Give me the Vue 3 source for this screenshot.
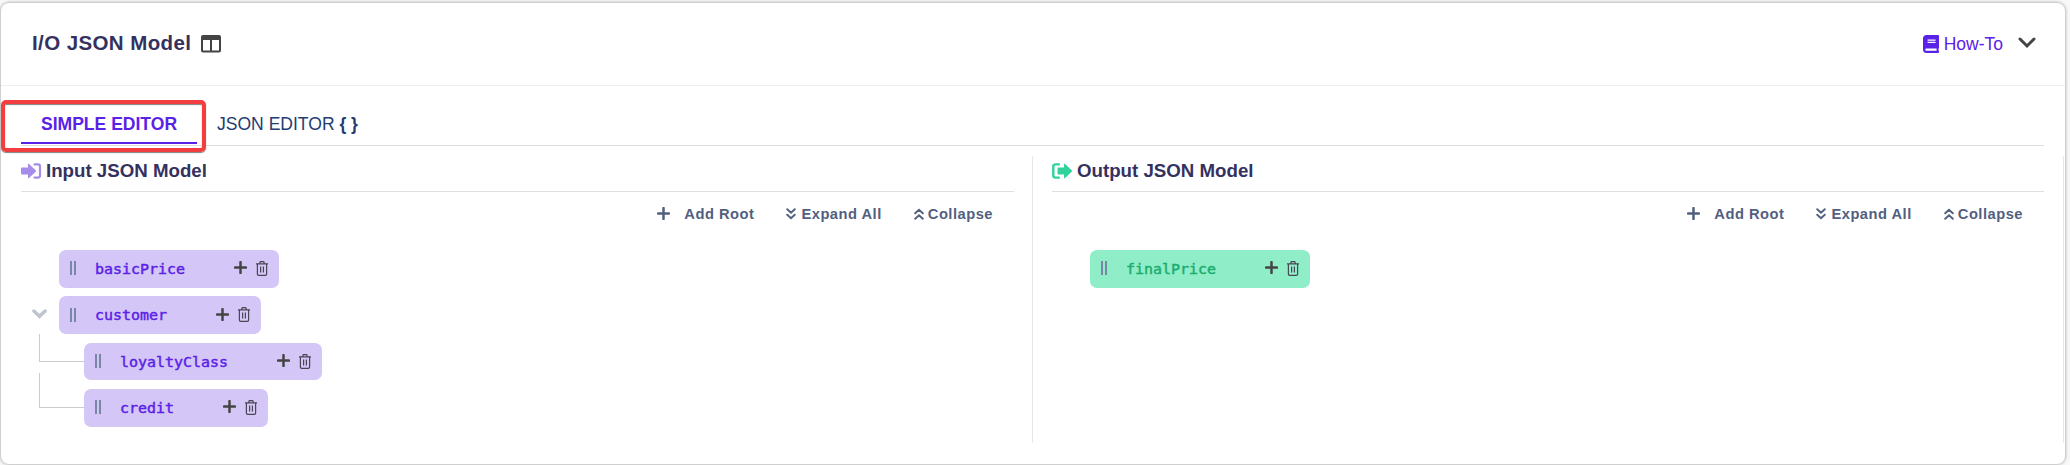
<script setup>
const columns = [
  {
    id: 'input',
    title: 'Input JSON Model',
    nodes: [
      { name: 'basicPrice' },
      { name: 'customer', open: true },
      { name: 'loyaltyClass', child: true, first: true },
      { name: 'credit', child: true },
    ],
  },
  { id: 'output', title: 'Output JSON Model', nodes: [{ name: 'finalPrice' }] },
]
</script>

<template>
  <div class="page">
    <section class="card">
      <header class="header">
        <h1 class="title">I/O JSON Model</h1>
        <svg class="layout-icon" width="20" height="18" viewBox="0 0 20 18">
          <path fill="#444" fill-rule="evenodd" d="M2 0h16a2 2 0 0 1 2 2v13.500a2 2 0 0 1-2 2H2a2 2 0 0 1-2-2V2a2 2 0 0 1 2-2zM2 5v10.500h7V5zM11 5v10.500h7V5z" />
        </svg>
        <a class="howto">
          <svg width="16" height="18" viewBox="0 0 448 512" preserveAspectRatio="none">
            <path fill="#5a21e6" d="M448 360V24c0-13.300-10.700-24-24-24H96C43 0 0 43 0 96v320c0 53 43 96 96 96h328c13.300 0 24-10.700 24-24v-16c0-7.500-3.500-14.300-8.900-18.700-4.200-15.400-4.200-59.300 0-74.700 5.400-4.300 8.900-11.100 8.900-18.600zM128 134c0-3.300 2.700-6 6-6h212c3.300 0 6 2.700 6 6v20c0 3.300-2.700 6-6 6H134c-3.300 0-6-2.700-6-6v-20zm0 64c0-3.300 2.700-6 6-6h212c3.300 0 6 2.700 6 6v20c0 3.300-2.700 6-6 6H134c-3.300 0-6-2.700-6-6v-20zm253.400 250H96c-17.700 0-32-14.300-32-32 0-17.600 14.400-32 32-32h285.400c-1.900 17.100-1.900 46.900 0 64z" />
          </svg>
          <span>How-To</span>
        </a>
        <svg class="chevron" width="18" height="12" viewBox="0 0 18 12">
          <path d="M2 2l7 7 7-7" fill="none" stroke="#444" stroke-width="3" stroke-linecap="round" />
        </svg>
      </header>

      <div class="body">
        <nav class="tabs">
          <a class="tab active">SIMPLE EDITOR</a>
          <a class="tab">JSON EDITOR <b>{ }</b></a>
          <span class="highlight"></span>
        </nav>
        <div class="columns">
          <section v-for="col in columns" :key="col.id" class="column" :class="col.id">
            <h2 class="column-title">
              <svg v-if="col.id === 'input'" width="21" height="16" viewBox="0 0 21 16">
                <path fill="#a78bea" d="M0 5.500q0-1 1-1h6V1.200q0-1.200 1-.3l6.700 6.300q.8.800 0 1.600L8 15.100q-1 .9-1-.3v-3.300H1q-1 0-1-1z" />
                <path fill="none" stroke="#a78bea" stroke-width="2.200" stroke-linecap="round" d="M13.500 1.400H17q2 0 2 2v9.200q0 2-2 2h-3.500" />
              </svg>
              <svg v-else width="21" height="16" viewBox="0 0 21 16">
                <path fill="#2fd39b" d="M5.500 5.500q0-1 1-1H12V1.200q0-1.200 1-.3l6.700 6.300q.8.800 0 1.600L13 15.100q-1 .9-1-.3v-3.300H6.500q-1 0-1-1z" />
                <path fill="none" stroke="#2fd39b" stroke-width="2.400" stroke-linecap="round" d="M6.800 1.400H3.500q-2.200 0-2.200 2v9.200q0 2 2.200 2h3.300" />
              </svg>
              <span>{{ col.title }}</span>
            </h2>
            <div class="actions">
              <a class="action add">
                <svg width="13" height="13" viewBox="0 0 13 13"><path d="M6.500 1v11M1 6.500h11" stroke="currentColor" stroke-width="2.500" stroke-linecap="round" /></svg>
                Add Root
              </a>
              <a class="action expand">
                <svg width="10" height="12" viewBox="0 0 10 12"><path d="M1.200 1.200L5 4.700l3.800-3.500M1.200 6.700L5 10.200l3.800-3.500" fill="none" stroke="currentColor" stroke-width="1.900" stroke-linecap="round" /></svg>
                Expand All
              </a>
              <a class="action collapse">
                <svg width="10" height="12" viewBox="0 0 10 12"><path d="M1.200 5.300L5 1.800l3.800 3.500M1.200 10.800L5 7.300l3.800 3.500" fill="none" stroke="currentColor" stroke-width="1.900" stroke-linecap="round" /></svg>
                Collapse
              </a>
            </div>
            <div class="tree">
              <div v-for="n in col.nodes" :key="n.name" class="row">
                <span v-if="n.child" class="connector" :class="{ first: n.first }"></span>
                <span v-else class="toggle">
                  <svg v-if="n.open" width="15" height="10" viewBox="0 0 15 10"><path d="M1.900 2l5.600 5.300L13.100 2" fill="none" stroke="#bfc4d0" stroke-width="3.400" stroke-linecap="round" /></svg>
                </span>
                <div class="node">
                  <span class="grip"></span>
                  <span class="name">{{ n.name }}</span>
                  <svg class="plus" width="13" height="13" viewBox="0 0 13 13"><path d="M6.500 1.100v10.800M1.100 6.500h10.800" stroke="#444" stroke-width="2.500" stroke-linecap="round" /></svg>
                  <svg class="trash" width="12" height="15" viewBox="0 0 12 15">
                    <path d="M0 2.800h12M3.600 2.500L4.300.7h3.400l.7 1.800M1.400 3v9.900q0 1.400 1.300 1.400h6.600q1.300 0 1.300-1.400V3M4.600 5.500v6M7.400 5.500v6" fill="none" stroke="#4a4754" stroke-width="1.200" />
                  </svg>
                </div>
              </div>
            </div>
          </section>
        </div>
      </div>
    </section>
  </div>
</template>

<style>
body { background: #f8f8f8; }
</style>

<style scoped>
* { box-sizing: border-box; }
.page {
  height: 465px;
  padding: 3px 5px 1px 1px;
  overflow: hidden;
  font-family: "Liberation Sans", Arial, sans-serif;
}
.card {
  height: 461px;
  background: #fff;
  border-radius: 8px;
  box-shadow: 0 0 3px 1px rgba(0, 0, 0, .26);
}
.header {
  display: flex;
  align-items: center;
  height: 83px;
  padding: 0 29px 0 31px;
  border-bottom: 1px solid #efefef;
}
.title { margin: 0 0 2px; font-size: 20.500px; letter-spacing: .4px; line-height: 24px; color: #35315f; white-space: nowrap; }
.layout-icon { margin: 0 auto 0 10px; }
.howto { display: flex; align-items: center; gap: 5px; font-size: 17.500px; color: #5a21e6; }
.chevron { margin-left: 15px; margin-bottom: 3px; }
.body { padding: 14px 1px 0 0; }
.tabs {
  position: relative;
  display: flex;
  height: 46px;
  margin: 0 20px;
  border-bottom: 1px solid #dfdfdf;
  font-size: 17.550px;
  color: #233c73;
}
.tab { padding-left: 20px; line-height: 49px; white-space: nowrap; }
.tab.active { width: 176px; height: 44px; border-bottom: 2px solid #5a21e6; color: #5a21e6; font-weight: 700; }
.highlight {
  position: absolute;
  left: -20px;
  top: 0;
  width: 205px;
  height: 52px;
  border: 4px solid #f33e40;
  border-radius: 5px;
  box-shadow: 0 1px 1px rgba(0, 0, 0, .5), inset 0 1px 1px rgba(0, 0, 0, .5);
}
.columns { display: flex; padding-top: 10px; }
.column { height: 287px; border-right: 1px solid #e5e7eb; }
.input { width: 1032px; padding: 0 18px 0 20px; }
.output { width: 1031px; padding: 0 19px; }
.column-title {
  display: flex;
  align-items: center;
  gap: 4px;
  height: 36px;
  margin: 0;
  padding-bottom: 6px;
  border-bottom: 1px solid #dfdfdf;
  font-size: 18.700px;
  color: #35315f;
}
.column-title span { padding-top: 1px; }
.actions {
  display: flex;
  justify-content: flex-end;
  height: 43px;
  padding-right: 21px;
  font-size: 14.700px;
  font-weight: 700;
  letter-spacing: .5px;
  color: #52607f;
}
.action { display: flex; align-items: center; white-space: nowrap; }
.add { gap: 14px; margin-right: 32px; }
.expand { gap: 5px; margin-right: 32px; }
.collapse { gap: 4px; }
.tree { display: flex; flex-direction: column; gap: 8.900px; padding-top: 15px; }
.row { display: flex; height: 37.500px; }
.toggle { width: 38px; padding: 9px 0 0 11px; }
.connector {
  width: 45px;
  height: 35px;
  margin: -16px 0 0 18px;
  border-left: 1px solid #ccc;
  border-bottom: 1px solid #ccc;
}
.connector.first { height: 28px; margin-top: -9px; }
.node {
  display: flex;
  align-items: center;
  padding: 0 11px;
  border-radius: 7px;
  background: #d4c6f7;
  color: #5a21e6;
}
.output .node { background: #8feec8; color: #1bad70; }
.grip { width: 6px; height: 14px; margin: 0 19px 1px 0; border: solid #7887a8; border-width: 0 2px; }
.name {
  font-family: "DejaVu Sans Mono", "Liberation Mono", monospace;
  font-size: 14.950px;
  line-height: 18px;
  -webkit-text-stroke: .45px currentColor;
}
.plus { margin: 0 9px 2px 49px; }
.trash { margin-bottom: 1px; }
</style>
